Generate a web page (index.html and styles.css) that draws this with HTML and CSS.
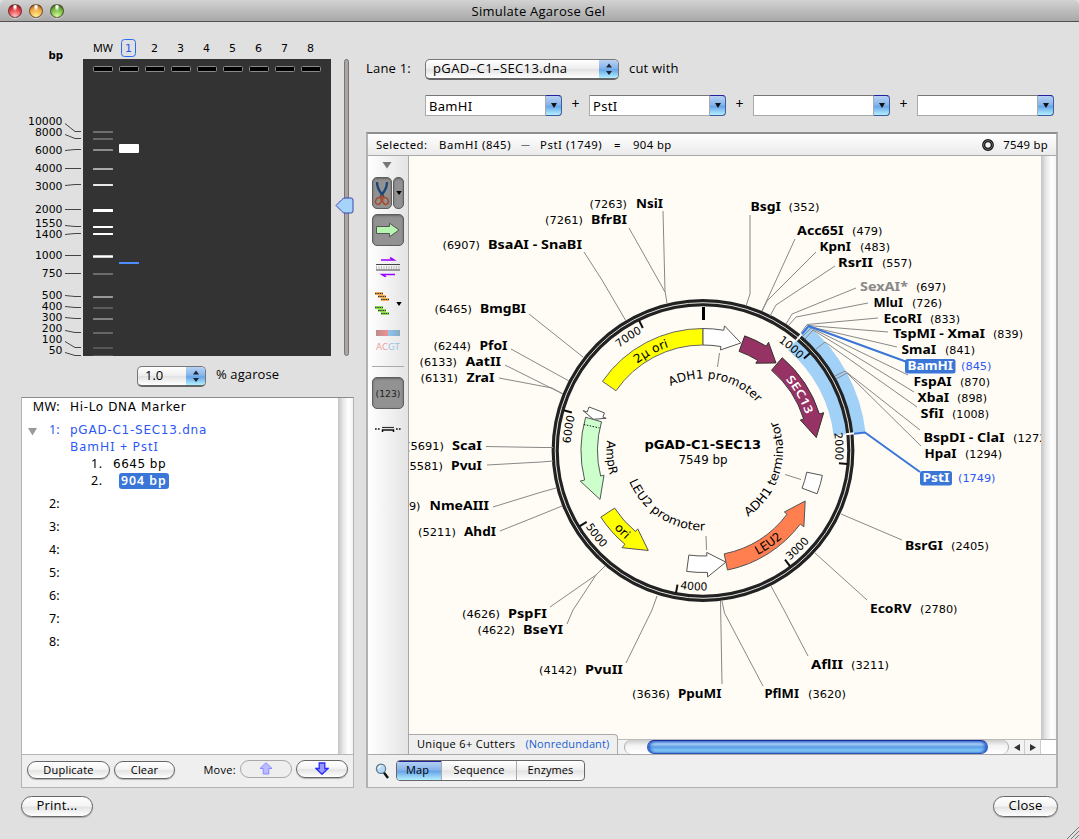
FILE: index.html
```html
<!DOCTYPE html>
<html lang="en">
<head>
<meta charset="utf-8">
<title>Simulate Agarose Gel</title>
<link rel="stylesheet" href="styles.css">
</head>
<body>
<div class="window">
  <header class="titlebar">
    <div class="lights"><i class="light red"></i><i class="light amber"></i><i class="light green"></i></div>
    <h1 class="title">Simulate Agarose Gel</h1>
  </header>
  <main class="content">
    <section class="left">
      <svg class="gel" id="gel" width="340" height="340" viewBox="21 23 340 340"></svg>
      <div class="agarose"><div class="select small"><span class="value">1.0</span><span class="stepper"><svg width="20" height="20" viewBox="0 0 20 20"><path d="M7 8.500h6L10 4.500zM7 12h6L10 16z"/></svg></span></div><span class="lucida">% agarose</span></div>
      <div class="panel lanes">
        <div class="lane-area">
          <div class="lane-list">
            <div class="row mw"><span class="key">MW:</span><span class="wide-text">Hi-Lo DNA Marker</span></div>
            <div class="row active"><svg class="disclosure" width="9" height="8" viewBox="0 0 9 8"><path d="M0 0h9L4.500 7.500z" fill="#999"/></svg><span class="key">1:</span><span class="wide-text file">pGAD-C1-SEC13.dna</span></div>
            <div class="row cutters active"><span class="key"></span><span>BamHI + PstI</span></div>
            <div class="row frag"><span class="num">1.</span><span class="size">6645 bp</span></div>
            <div class="row frag"><span class="num">2.</span><span class="size chosen">904 bp</span></div>
            <div class="row empty first"><span class="key">2:</span></div>
            <div class="row empty"><span class="key">3:</span></div>
            <div class="row empty"><span class="key">4:</span></div>
            <div class="row empty"><span class="key">5:</span></div>
            <div class="row empty"><span class="key">6:</span></div>
            <div class="row empty"><span class="key">7:</span></div>
            <div class="row empty"><span class="key">8:</span></div>
          </div>
          <div class="vtrack"></div>
        </div>
        <div class="lane-tools">
          <button class="pill dup">Duplicate</button><button class="pill clear">Clear</button>
          <span class="move">Move:</span>
          <button class="pill arrow off"><svg width="14" height="13" viewBox="0 0 14 13"><path d="M7 .7L13 6.500H9.800V12H4.200V6.500H1z" fill="#bbf" stroke="#8a8aff"/></svg></button>
          <button class="pill arrow"><svg width="14" height="13" viewBox="0 0 14 13"><path d="M7 12.300L13 6.500H9.800V1H4.200V6.500H1z" fill="#99f" stroke="#2b2bff" stroke-width="1.300"/></svg></button>
        </div>
      </div>
    </section>
    <section class="right">
      <div class="lane-row"><span class="lane-label">Lane 1:</span><div class="select file-select"><span class="value">pGAD–C1–SEC13.dna</span><span class="stepper"><svg width="20" height="20" viewBox="0 0 20 20"><path d="M7 8.500h6L10 4.500zM7 12h6L10 16z"/></svg></span></div><span class="cut">cut with</span></div>
      <div class="enzymes">
        <div class="combo"><span>BamHI</span><i></i></div><b>+</b>
        <div class="combo"><span>PstI</span><i></i></div><b>+</b>
        <div class="combo"><span></span><i></i></div><b>+</b>
        <div class="combo"><span></span><i></i></div>
      </div>
      <div class="panel map-panel">
        <div class="map-head">
          <span class="s1">Selected:</span><span class="s2">BamHI (845)</span><span class="s3">—</span><span class="s4">PstI (1749)</span><span class="s5">=</span><span class="s6">904 bp</span>
          <svg class="ring" width="12" height="12" viewBox="0 0 12 12"><circle cx="6" cy="6" r="4.300" fill="none" stroke="#111" stroke-width="3.200"/><circle cx="6" cy="6" r="4.400" fill="none" stroke="#aaa" stroke-width=".6"/></svg><span>7549 bp</span>
        </div>
        <div class="map-body">
          <div class="toolbar">
            <svg class="collapse" width="10" height="7" viewBox="0 0 10 7"><path d="M.5 0h9L5 6.500z" fill="#777"/></svg>
            <div class="split">
              <div class="tool scissors"><svg width="18" height="30" viewBox="0 0 18 30"><path d="M4 4Q4 10 8 15L10.500 19M14 4Q14 10 10 15L7.500 19" fill="none" stroke="#1c4678" stroke-width="2.400"/><g fill="none" stroke="#a9492a" stroke-width="1.500"><ellipse cx="5.500" cy="23" rx="2.800" ry="3.400" transform="rotate(25 5.500 23)"/><ellipse cx="12.500" cy="23" rx="2.800" ry="3.400" transform="rotate(-25 12.500 23)"/><path d="M7 20L9 17.500L11 20"/></g></svg></div>
              <div class="tool more"><svg width="6" height="4" viewBox="0 0 6 4"><path d="M.3 0h5.400L3 4z"/></svg></div>
            </div>
            <div class="tool wide"><svg width="26" height="16" viewBox="0 0 26 16"><path d="M1.500 4.500H14.500V1.200L24 8L14.500 14.800V11.500H1.500z" fill="#b6f5b0" stroke="#545454"/></svg></div>
            <svg class="primers" width="26" height="20" viewBox="0 0 26 20"><path d="M6 3H19L15 .5M20 17.500H7L11 20" fill="none" stroke="#90f" stroke-width="1.500"/><path d="M1 10.500H25" stroke="#bbb" stroke-width="3" stroke-dasharray="1 1.500"/><path d="M1 7.500H25M1 13H25" stroke="#444" stroke-width="1.200"/></svg>
            <div class="reads"><svg width="15" height="26" viewBox="0 0 15 26"><g stroke="#efad58" stroke-width="3"><path d="M0 2.500H8M3 5.500H11M6 8.500H14"/></g><g stroke="#8fdd50" stroke-width="3"><path d="M0 16.500H8M3 19.500H11M6 22.500H14"/></g><path d="M0 2.500H8M3 5.500H11M6 8.500H14M0 16.500H8M3 19.500H11M6 22.500H14" stroke="#333" stroke-dasharray="1.500 .8"/></svg><svg width="6" height="4" viewBox="0 0 6 4"><path d="M.3 0h5.400L3 4z"/></svg></div>
            <svg class="acgt" width="26" height="22" viewBox="0 0 26 22"><defs><linearGradient id="rd"><stop stop-color="#bd8c8c"/><stop offset="1" stop-color="#f19090"/></linearGradient><linearGradient id="bl"><stop stop-color="#8cc8f5"/><stop offset="1" stop-color="#8aa8bd"/></linearGradient></defs><path d="M1 0H13V6H1z" fill="url(#rd)"/><path d="M13 0H25V6H13z" fill="url(#bl)"/><text x="1" y="20" class="dejavu" font-size="9" textLength="24" lengthAdjust="spacingAndGlyphs" fill="#eda29a">AC<tspan fill="#9dc3e5">GT</tspan></text></svg>
            <div class="rule"></div>
            <div class="tool wide numbers"><span>(123)</span></div>
            <svg class="unit" width="28" height="8" viewBox="0 0 28 8"><path d="M1 3H6M22 3H27" stroke="#111" stroke-width="1.600" stroke-dasharray="1.700 1.200"/><path d="M8 1.500H20" stroke="#333" stroke-width="1.200"/><path d="M8.500 6V4H19.500V6" fill="none" stroke="#111" stroke-width="1.500"/></svg>
          </div>
          <div class="map-view">
            <svg class="plasmid" id="map" width="632" height="583" viewBox="409 156 632 583"></svg>
            <div class="map-foot">
              <div class="cut-tab"><span>Unique 6+ Cutters</span><span class="nonred">(Nonredundant)</span></div>
              <div class="hscroll"><div class="htrack"><div class="thumb"></div></div><i class="sb"><svg width="6" height="7" viewBox="0 0 6 7"><path d="M6 0V7L0 3.500z" fill="#333"/></svg></i><i class="sb"><svg width="6" height="7" viewBox="0 0 6 7"><path d="M0 0V7L6 3.500z" fill="#333"/></svg></i></div>
            </div>
          </div>
          <div class="side-scroll"><div class="vtrack"></div><div class="corner"></div></div>
        </div>
        <div class="view-bar">
          <svg class="lens" width="15" height="16" viewBox="0 0 15 16"><path d="M8.500 9L13 15" stroke="#111" stroke-width="2.400"/><circle cx="6" cy="5.800" r="4.600" fill="#b9daf3" stroke="#5a7890" stroke-width="1.200"/><path d="M3.500 5.500Q4 3 6.500 3" fill="none" stroke="#fff" stroke-width="1.200"/></svg>
          <div class="segments"><span class="seg on">Map</span><span class="seg seq">Sequence</span><span class="seg enz">Enzymes</span></div>
        </div>
      </div>
    </section>
  </main>
  <footer class="footer"><button class="pill big print">Print...</button><button class="pill big close">Close</button><svg class="grip" width="13" height="13" viewBox="0 0 13 13"><path d="M1 13L13 1M5 13L13 5M9 13L13 9" stroke="#777"/></svg></footer>
</div>
<script src="map.js"></script>
</body>
</html>
```

FILE: styles.css
```css
* { box-sizing: border-box; }
body { margin: 0; background: #e0e0e0; font-family: "Noto Sans", "DejaVu Sans", sans-serif; font-size: 12px; color: #000; }
button { font: inherit; color: inherit; margin: 0; }
.window { width: 1079px; height: 839px; display: flex; flex-direction: column; overflow: hidden; background: #e0e0e0; }
.noto { font-family: "Noto Sans", sans-serif; }
.dejavu { font-family: "DejaVu Sans", sans-serif; }

.titlebar { height: 22px; flex: none; display: grid; grid-template-columns: 70px 1fr 72px; align-items: center; background: linear-gradient(#d2d2d2, #a8a8a8); border-bottom: 1px solid #515151; border-radius: 5px 5px 0 0; }
.title { margin: 0; font: 13px/20px "Open Sans", sans-serif; letter-spacing: .25px; text-align: center; padding-top: 1px; }
.lights { display: flex; gap: 7px; padding-left: 8px; }
.light { width: 14px; height: 14px; border-radius: 50%; border: 1px solid rgba(60,30,30,.65); box-shadow: 0 1px 0 rgba(255,255,255,.5); }
.red { background: radial-gradient(ellipse at 50% 15%, #fff 0 8%, transparent 30%), radial-gradient(circle at 50% 95%, #ffc5c5, #e33a3f 60%, #85191e); }
.amber { background: radial-gradient(ellipse at 50% 15%, #fff 0 8%, transparent 30%), radial-gradient(circle at 50% 95%, #fff59a, #efa63f 60%, #8d4a10); }
.green { background: radial-gradient(ellipse at 50% 15%, #fff 0 8%, transparent 30%), radial-gradient(circle at 50% 95%, #d4ff9c, #72b440 60%, #2e6310); }

.content { display: grid; grid-template-columns: 333px 692px; column-gap: 12px; padding: 1px 21px 0; height: 766px; flex: none; }
.left, .right { display: flex; flex-direction: column; min-width: 0; }
.gel { flex: none; margin-right: -7px; }
.agarose { height: 34px; flex: none; display: flex; align-items: flex-start; gap: 10px; padding: 3px 0 0 116px; }
.lucida { font: 13px/17px "Open Sans", sans-serif; letter-spacing: .1px; }
.select { display: flex; height: 21px; border: 1px solid #777; border-bottom: 2px solid #666; border-radius: 5px; background: linear-gradient(#fff, #eee 48%, #e2e2e2 52%, #fff); overflow: hidden; }
.select .value { flex: 1; padding-left: 7px; font: 13px/17px "Open Sans", sans-serif; white-space: nowrap; }
.select.small { width: 69px; }
.stepper { width: 20px; margin: -1px -1px 0 0; border-top: 1px solid #22229a; border-right: 1px solid #3b5ba4; background: linear-gradient(#b8d2f3, #87b5ec 45%, #68a5e8 55%, #b3f0ff); }
.stepper svg { display: block; margin-top: -1px; fill: #1b2430; }

.panel { border: 1px solid #b3b3b3; background: #efefef; display: flex; flex-direction: column; }
.lanes { height: 391px; border-top-color: #8c8c8c; }
.lane-area { height: 357px; flex: none; display: flex; background: #fff; border-bottom: 1px solid #b5b5b5; }
.lane-list { flex: 1; font-size: 12px; padding-top: 1px; letter-spacing: .25px; }
.row { display: flex; height: 17px; line-height: 16px; position: relative; white-space: pre; }
.row .key { width: 38px; text-align: right; margin-right: 10px; flex: none; font-size: 12.5px; letter-spacing: .3px; }
.row.mw { margin-bottom: 6px; }
.row.active { color: #2b57f5; }
.wide-text { font-family: "DejaVu Sans", sans-serif; font-size: 12px; letter-spacing: .65px; }
.wide-text.file { letter-spacing: .75px; }
.cutters { font-size: 12.5px; letter-spacing: 1.05px; }
.disclosure { position: absolute; left: 6px; top: 6px; }
.frag .num { padding-left: 69px; width: 91px; font-size: 12.5px; letter-spacing: .7px; }
.frag .size { font-family: "DejaVu Sans", sans-serif; font-size: 12px; letter-spacing: .5px; }
.frag .chosen { height: 16px; margin-left: 6px; padding: 0 2px; border-radius: 3px; background: #3a76d8; color: #fff; font-family: "Noto Sans", sans-serif; font-size: 12.3px; font-weight: 600; letter-spacing: 1px; }
.row.empty { height: 23px; }
.row.first { margin-top: 6px; }
.vtrack { width: 15px; flex: 1; background: linear-gradient(90deg, #c4c4c4, #e8e8e8 35%, #fff 70%, #f5f5f5); }
.lane-area .vtrack { flex: none; }
.lane-tools { flex: 1; display: flex; align-items: flex-start; padding: 6px 5px 0 5px; }
.pill { height: 18px; padding: 0 0 1px; border: 1.500px solid #666; border-radius: 10px; background: linear-gradient(#fff, #f4f4f4 45%, #e4e4e4 55%, #fff); font: 11px/14px "Open Sans", sans-serif; letter-spacing: .2px; text-align: center; box-shadow: 0 1px 1px rgba(0,0,0,.25); }
.dup { width: 83px; margin-right: 4px; }
.clear { width: 61px; }
.move { margin: 1px 4px 0 auto; font: 11px/16px "Open Sans", sans-serif; letter-spacing: .3px; }
.arrow { width: 52px; margin-left: 4px; margin-top: -1px; }
.arrow svg { display: block; margin: 1px auto; }
.arrow.off { border-color: #a8a8a8; background: #eee; box-shadow: none; margin-left: 0; }

.lane-row { display: flex; height: 21px; margin-top: 36px; flex: none; align-items: center; }
.lane-label { width: 59px; font: 13px/18px "Open Sans", sans-serif; letter-spacing: .2px; padding-bottom: 3px; }
.file-select { width: 194px; }
.file-select .value { letter-spacing: .4px; }
.cut { margin-left: 10px; font: 13px/18px "Open Sans", sans-serif; letter-spacing: .2px; padding-bottom: 4px; }
.enzymes { display: flex; margin: 15px 0 0 59px; height: 21px; flex: none; }
.enzymes b { width: 27px; text-align: center; font: 14px/18px "Noto Sans", sans-serif; }
.combo { width: 137px; height: 21px; display: flex; background: #fff; border: 1px solid #aaa; border-top: 1px solid #777; border-right: 0; border-radius: 0 4px 4px 0; }
.combo span { flex: 1; padding-left: 3px; font-size: 13px; line-height: 21px; letter-spacing: .3px; }
.combo i { width: 17px; margin: -1px 0; border: 1px solid #3e5da0; border-top-color: #22229a; border-left-color: #aaa; border-radius: 0 4px 4px 0; background: linear-gradient(#b8d2f3, #87b5ec 45%, #68a5e8 55%, #b3f0ff); display: grid; place-items: center; }
.combo i::after { content: ""; border: 3px solid transparent; border-top: 5px solid #111; border-bottom: 0; }

.map-panel { height: 656px; margin-top: 16px; border: 2px solid #b1b1b1; border-top: 2px solid #8e8e8e; border-bottom-width: 1px; flex: none; }
.map-head { display: flex; height: 22px; flex: none; padding: 0 8px; font-size: 11.3px; line-height: 22px; letter-spacing: .6px; border-bottom: 1px solid #aaa; background: linear-gradient(#fff, #eaeaea); white-space: nowrap; }
.s1 { width: 63px; letter-spacing: .4px; } .s2 { width: 82px; } .s3 { width: 19px; } .s4 { width: 74px; } .s5 { width: 19px; } .s6 { flex: 1; letter-spacing: .4px; }
.s3 { font-size: 9px; letter-spacing: 0; }
.ring { margin: 5px 9px 0 0; }
.ring + span { letter-spacing: .3px; }
.map-body { height: 599px; display: flex; border-bottom: 1px solid #aaa; flex: none; }
.toolbar { width: 41px; flex: none; display: flex; flex-direction: column; border-right: 1px solid #a6a6a6; background: linear-gradient(90deg, #fff, #e4e4e4); padding-left: 4px; }
.collapse { margin: 6px 0 8px 10px; flex: none; }
.split { display: flex; gap: 1px; margin-bottom: 5px; }
.tool { height: 32px; border: 1px solid #5e5e5e; border-radius: 5px; background: #929292; display: grid; place-items: center; flex: none; box-shadow: inset 0 1px 2px #666; }
.scissors { width: 20px; } .more { width: 11px; } .wide { width: 32px; }
.primers { margin: 11px 0 0 3px; flex: none; }
.reads { display: flex; align-items: center; gap: 6px; margin: 14px 0 0 3px; height: 26px; flex: none; }
.acgt { margin: 13px 0 0 3px; flex: none; }
.rule { height: 1px; background: #aaa; width: 32px; margin: 14px 0 10px; flex: none; }
.numbers { font: 9.300px "DejaVu Sans", sans-serif; color: #222; }
.unit { margin: 17px 0 0 2px; flex: none; }
.map-view { width: 632px; height: 598px; flex: none; display: flex; flex-direction: column; background: #fffcf5; }
.plasmid { display: block; flex: none; }
.map-foot { height: 15px; display: flex; align-items: flex-end; }
.cut-tab { width: 209px; flex: none; height: 20px; display: flex; gap: 10px; padding-left: 8px; background: #efefef; border: 1px solid #aaa; border-left: 0; border-bottom: 0; border-radius: 0 4px 0 0; font: 11px/18px "Open Sans", sans-serif; letter-spacing: .32px; white-space: nowrap; }
.nonred { color: #1b5fd0; letter-spacing: .1px; }
.hscroll { flex: 1; height: 15px; display: flex; border-top: 1px solid #bbb; background: #f2f2f2; }
.htrack { margin-left: 6px; width: 385px; flex: none; border-radius: 8px; border: solid #aaa; border-width: 0 1px; background: linear-gradient(#ccc, #f3f3f3 40%, #fff); padding-left: 22px; }
.thumb { width: 341px; height: 14px; border-radius: 7px; border: 1px solid #2a55b8; border-top-color: #2030a0; background: linear-gradient(#6a9de5, #a8cdf4 25%, #5b9ee6 50%, #6cb2f2 65%, #a6ecff); box-shadow: inset 2px 0 3px #2a60c8, inset -2px 0 3px #2a60c8; }
.sb { flex: 1; display: grid; place-items: center; border-right: 1px solid #ccc; }
.side-scroll { width: 15px; display: flex; flex-direction: column; }
.corner { height: 15px; background: #fff; border-top: 1px solid #aaa; }
.view-bar { flex: 1; display: flex; padding: 5px 0 0 7px; }
.lens { margin-top: 3px; }
.segments { display: flex; margin-left: 6px; width: 189px; height: 21px; border: 1px solid #666; border-radius: 4px; overflow: hidden; background: linear-gradient(#fff, #eee 48%, #e2e2e2 52%, #fff); font: 11px/18px "Open Sans", sans-serif; letter-spacing: .1px; text-align: center; }
.seg.on { width: 44px; padding-right: 3px; background: linear-gradient(#b8d2f3, #87b5ec 45%, #68a5e8 55%, #b3f0ff); box-shadow: inset 0 1px #22229a; }
.seg + .seg { border-left: 1px solid #aaa; }
.seq { width: 75px; } .enz { flex: 1; }

.footer { display: flex; justify-content: space-between; padding: 8px 21px 0; flex: 1; position: relative; }
.pill.big { height: 21px; border-radius: 11px; font-size: 13px; line-height: 15px; padding-bottom: 2px; }
.print { width: 72px; } .close { width: 65px; }
.grip { position: absolute; right: 0; bottom: 0; }
```

FILE: map.js
```js
const NS = 'http://www.w3.org/2000/svg';
const el = (parent, tag, attrs, text) => {
  const node = document.createElementNS(NS, tag);
  for (const k in attrs) node.setAttribute(k, attrs[k]);
  if (text !== undefined) node.textContent = text;
  parent.appendChild(node);
  return node;
};

/* ---- gel ---- */
const gel = document.getElementById('gel');
const label = (svg, s, x0, x1, y, size, extra = {}) => el(svg, 'text', Object.assign(
  { x: x0, y, 'font-size': size, textLength: x1 - x0, lengthAdjust: 'spacingAndGlyphs', class: 'noto' }, extra), s);

el(gel, 'rect', { x: 83, y: 59, width: 248, height: 297, fill: '#333' });
label(gel, 'bp', 48.5, 63, 59, 11, { 'font-weight': 700, class: 'dejavu' });
label(gel, 'MW', 93, 113, 52, 11.5);
for (let i = 0; i < 9; i++) {
  const x = 93 + i * 26;
  el(gel, 'rect', { x: x + .5, y: 66.5, width: 19, height: 5, rx: 1, fill: '#000', stroke: '#8a8a8a' });
  if (i) label(gel, String(i), x + 6, x + 13, 52, 11, { class: 'dejavu', fill: i === 1 ? '#2b57f5' : '#000' });
}
el(gel, 'rect', { x: 121.5, y: 39.5, width: 14, height: 17, rx: 3, fill: 'none', stroke: '#2b6af5' });

[[10000, 125, 131.5], [8000, 136, 138.5], [6000, 154, 149.5], [4000, 172, 168.5], [3000, 190, 184.5],
 [2000, 213, 209.5], [1550, 227, 226.5], [1400, 238, 233.5], [1000, 259, 255.5], [750, 277, 273.5],
 [500, 299, 296.5], [400, 310, 307.5], [300, 321, 318.5], [200, 332, 332.5], [100, 343, 347.5], [50, 354, 355.5]
].forEach(([n, y, t]) => {
  const s = String(n);
  label(gel, s, 62.5 - s.length * 6.900, 62.5, y, 11.3, { class: 'dejavu' });
  const mid = y - 3.5;
  const a = Math.abs(mid - t) < .6 ? t : mid > t ? t + 1 : mid + (t - mid > 2 ? 2 : 0);
  el(gel, 'polyline', { points: `65,${a} 75,${t} 81,${t}`, fill: 'none', stroke: '#444' });
});
[[132, 2, '#6e6e6e'], [139, 2, '#686868'], [150, 2, '#8d8d8d'], [169, 2, '#aaa'], [185, 2, '#e8e8e8'], [210.500, 3, '#fff'],
 [227, 2, '#fff'], [234, 2, '#fff'], [256.500, 2.500, '#fff'], [274, 2, '#6c6c6c'], [297, 2, '#999'], [308, 2, '#5c5c5c'],
 [319, 2, '#808080'], [333, 2, '#666'], [348, 2, '#555'], [355.500, 1, '#555']
].forEach(([y, h, c]) => el(gel, 'rect', { x: 93, y: y - h / 2, width: 20, height: h, rx: .5, fill: c }));
el(gel, 'rect', { x: 119, y: 144, width: 20, height: 9, rx: 1, fill: '#fff' });
el(gel, 'rect', { x: 119, y: 262, width: 20, height: 2, fill: '#4d8dff' });
el(gel, 'rect', { x: 344.5, y: 59.5, width: 4, height: 296, rx: 2, fill: '#aaa6a6', stroke: '#7b7272' });
el(gel, 'path', { d: 'M336 205.500L342 199.500Q343 198 345 198H351Q353 198 353 200V211Q353 213 351 213H345Q343 213 342 211.500Z', fill: '#a5d3fa', stroke: '#3948b4' });

/* ---- plasmid ---- */
const map = document.getElementById('map');
const CX = 703, CY = 450.5, TOTAL = 7549;
const pt = (deg, r) => {
  const a = deg * Math.PI / 180;
  return `${(CX + r * Math.sin(a)).toFixed(2)} ${(CY - r * Math.cos(a)).toFixed(2)}`;
};
const arc = (a, b, r) => `A${r} ${r} 0 ${Math.abs(b - a) > 180 ? 1 : 0} ${b > a ? 1 : 0} ${pt(b, r)}`;

const blk = (a, b, r1, r2, attrs) =>
  el(map, 'path', Object.assign({ d: `M${pt(a, r2)}${arc(a, b, r2)}L${pt(b, r1)}${arc(b, a, r1)}Z` }, attrs));
const arrow = (start, neck, tip, fill, stroke = '#555') => el(map, 'path', {
  d: `M${pt(start, 122)}${arc(start, neck, 122)}L${pt(neck, 126.500)}L${pt(tip, 114)}L${pt(neck, 102)}L${pt(neck, 105.500)}${arc(neck, start, 105.500)}Z`,
  fill, stroke
});

blk(40.300, 83.500, 131.500, 163.500, { fill: '#a2d1f7' });
el(map, 'circle', { cx: CX, cy: CY, r: 147.8, fill: 'none', stroke: '#222', 'stroke-width': 7.200 });
el(map, 'circle', { cx: CX, cy: CY, r: 147.8, fill: 'none', stroke: '#e4e4e0', 'stroke-width': 1 });
[40.300, 83.500].forEach(a => el(map, 'path', { d: `M${pt(a, 144)}L${pt(a, 152)}`, stroke: '#fff', 'stroke-width': 2 }));
el(map, 'path', { d: 'M703.500 307V320', stroke: '#000', 'stroke-width': 3 });

const curve = (s, mid, r, len, size, ccw, attrs = {}) => {
  const half = len / r * 90 / Math.PI + 12;
  const a = ccw ? mid + half : mid - half, b = ccw ? mid - half : mid + half;
  const id = 'c' + map.childNodes.length;
  el(map, 'path', { id, d: `M${pt(a, r)}${arc(a, b, r)}`, fill: 'none' });
  const t = el(map, 'text', Object.assign({ 'font-size': size, class: 'dejavu', 'text-anchor': 'middle' }, attrs));
  el(t, 'textPath', { href: '#' + id, startOffset: '50%', textLength: len, lengthAdjust: 'spacingAndGlyphs' }, s);
};
for (let k = 1; k <= 7; k++) {
  const a = k * 1000 / TOTAL * 360, ccw = k > 2 && k < 6;
  el(map, 'path', { d: `M${pt(a, 145)}L${pt(a, 136.500)}`, stroke: '#111', 'stroke-width': 2 });
  const r = ccw ? 140 : 132.5, shift = (ccw ? 17 : 16.5) / r * 180 / Math.PI;
  curve(String(k * 1000), a - shift, r, 27.500, 11, ccw);
}

blk(-55.500, 0, 105.500, 122, { fill: '#ff0', stroke: '#666' });
arrow(0, 9.800, 19.400, '#fff');
arrow(20, 31.200, 39.800, '#963264', '#333');
arrow(40.500, 72.600, 83.500, '#963264', '#333');
blk(101.800, 110.800, 106, 122, { fill: '#fff', stroke: '#555' });
arrow(168.400, 127.100, 116.300, '#ff7f50');
arrow(187.700, 177.900, 168.400, '#fff');
arrow(236.900, 219.800, 208.700, '#ff0');
arrow(285.800, 256, 244.600, '#cfc');
arrow(290.900, 288.400, 285.900, '#fff');
el(map, 'path', { d: `M${pt(282.300, 122)}L${pt(282.300, 106)}`, fill: 'none', stroke: '#111', 'stroke-dasharray': '1.500 1.500' });

curve('2μ ori', -27.800, 109, 36, 12, false);
curve('SEC13', 60, 109, 41, 11.5, false, { fill: '#fff', 'font-weight': 600, class: 'noto' });
curve('LEU2', 145, 118, 30, 12, true);
curve('ori', 225, 118, 16.500, 12, true);
curve('AmpR', 265.600, 96.500, 35, 12, true);
curve('LEU2 promoter', 213, 80, 96, 12, true);
curve('ADH1 promoter', 10.800, 72, 94, 12, false);
curve('ADH1 terminator', 107, 80, 108, 12, true);
label(map, 'pGAD-C1-SEC13', 644.500, 761, 448.5, 13, { 'font-weight': 700, class: 'dejavu' });
label(map, '7549 bp', 678.500, 727.500, 464, 12, { class: 'dejavu' });

const lead = (points, stroke = '#888', w = 1) => el(map, 'polyline', { points, fill: 'none', stroke, 'stroke-width': w });
['719.5,353 717.5,367', '706,536 706.5,550', '785,474.5 801,479.500',
 '663,211 665,291 667,303', '629,228 665,292', '584,252 602,280 626,321', '529,314 583,357', '511,349 569,381',
 '505,365 563,394', '499,378 552,388 563,394', '486,446.5 542,447.5 553,447.5', '487,465 541,462 553,461',
 '493,507 540,492.5 556,488', '500,531 540,515 562,506', '550,607 596,575 605,566', '567,624 573,610 596,575',
 '626,663 652,610 657,596', '722,684 720.5,601', '763,686 724.5,613 722,601', '808,656 784,610 771,586',
 '867,600 815,553', '902,540 841,514', '750,215 750,294 746,306', '795,239 762,311', '816,252 767,301 762,311',
 '835,266 776,305 770,316', '856,288 792,314 786,324', '868,303 796,317 789,325', '878,318 807,324.5 801,333',
 '888,332 808,325.5', '897,347 809,326.5', '908,375 811,328 803,336', '914,392 813,330 805,339',
 '917,407 825,342 815,350', '920,430 845,371 835,376', '921,446 847,373 836,379'].forEach(p => lead(p));
lead('802,334 808.5,326 907,362', '#3a76d8', 2);
lead('854,433.8 865,432.500 920,472', '#3a76d8', 2);

/* name, name x0, x1, position, position x0, x1, baseline */
[['NsiI', 636, 663, 7263, 589.5, 627, 208], ['BfrBI', 591, 627, 7261, 545, 583, 224],
 ['BsaAI - SnaBI', 488, 582, 6907, 442.5, 480, 249], ['BmgBI', 480, 526, 6465, 434.5, 472, 313],
 ['PfoI', 479.5, 507.5, 6244, 433.5, 471, 350], ['AatII', 465.5, 501, 6133, 419.5, 457, 366],
 ['ZraI', 466.5, 494.5, 6131, 420.5, 458, 382], ['ScaI', 452, 482, 5691, 406, 444, 450],
 ['PvuI', 451, 482, 5581, 405, 443, 470], ['NmeAIII', 429.5, 489, 5349, 383, 420.5, 510],
 ['AhdI', 464, 496, 5211, 418, 456, 536], ['PspFI', 508, 547, 4626, 462, 500, 618],
 ['BseYI', 523, 563, 4622, 477.5, 515, 634], ['PvuII', 585, 623, 4142, 539, 577, 674],
 ['PpuMI', 678, 721.5, 3636, 632, 670, 698], ['PflMI', 764.5, 799, 3620, 808, 846, 698],
 ['AflII', 811, 843, 3211, 851, 889, 669], ['EcoRV', 870, 911.5, 2780, 920, 957.5, 613],
 ['BsrGI', 905, 943, 2405, 951, 989, 550], ['BsgI', 750.5, 781, 352, 788.5, 819.5, 211],
 ['Acc65I', 797, 843.5, 479, 852, 882.5, 235], ['KpnI', 819.5, 851, 483, 860, 890, 251],
 ['RsrII', 838, 873, 557, 882, 912, 267], ['SexAI*', 860, 908, 697, 916, 946, 291],
 ['MluI', 873.5, 903, 726, 912, 942, 307], ['EcoRI', 883.5, 922, 833, 930, 960, 323],
 ['TspMI - XmaI', 893, 985, 839, 993, 1023, 338], ['SmaI', 901.5, 936, 841, 945, 975, 354],
 ['BamHI', 907.5, 953, 845, 961, 991.5, 370], ['FspAI', 913.5, 951.5, 870, 960, 990, 386],
 ['XbaI', 917.5, 949, 898, 957, 987, 402], ['SfiI', 920.5, 944, 1008, 952, 989, 418],
 ['BspDI - ClaI', 923.5, 1004.5, 1272, 1013, 1051, 442], ['HpaI', 924.5, 956.5, 1294, 965, 1002, 458],
 ['PstI', 922.5, 949.5, 1749, 958, 995.5, 482]
].forEach(([name, a, b, pos, c, d, y]) => {
  const on = name === 'BamHI' || name === 'PstI';
  if (on) el(map, 'rect', { x: a - 2.500, y: y - 11, width: b - a + 5, height: 14.5, rx: 2.500, fill: '#3a76d8' });
  label(map, name, a, b, y, 12, { 'font-weight': 700, fill: on ? '#fff' : name === 'SexAI*' ? '#888' : '#000' });
  label(map, `(${pos})`, c, d, y, 10.8, { class: 'dejavu', fill: on ? '#2b57f5' : '#000' });
});
```
